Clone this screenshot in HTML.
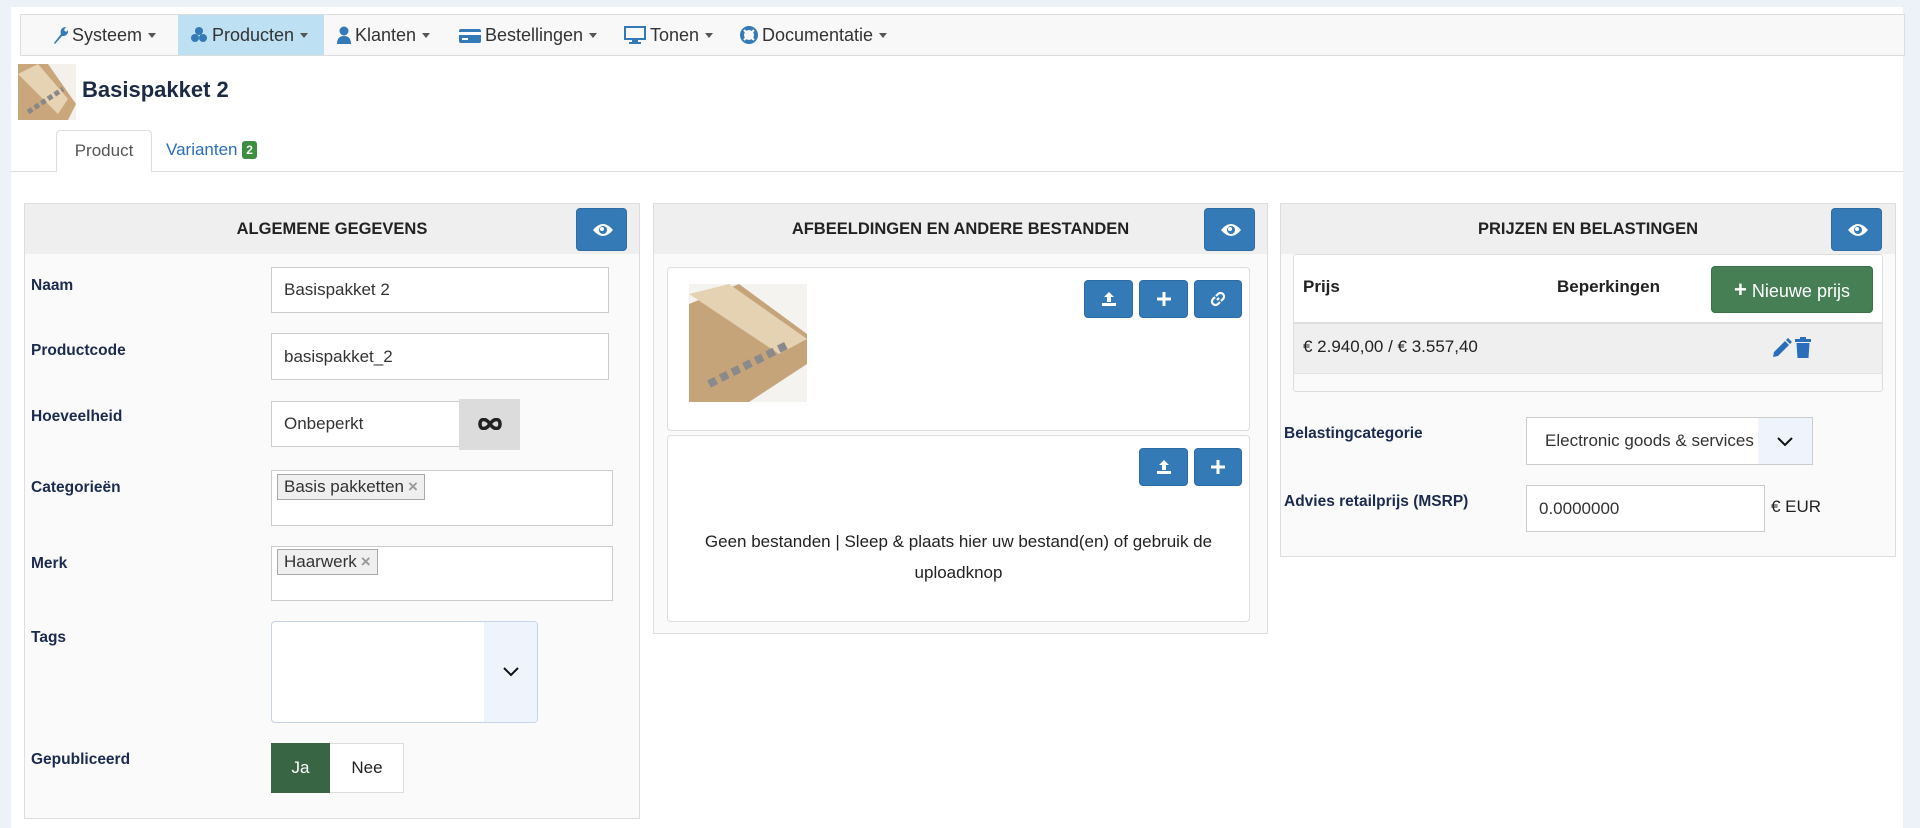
<!DOCTYPE html>
<html><head><meta charset="utf-8"><style>
*{box-sizing:border-box;margin:0;padding:0}
body{width:1920px;height:828px;background:#edf2f9;font-family:"Liberation Sans",sans-serif;font-size:17px;color:#222;position:relative;overflow:hidden}
.a{position:absolute}
.main{left:11px;top:7px;width:1892px;height:821px;background:#fff}
.nav{left:20px;top:14px;width:1885px;height:42px;background:#f8f8f8;border:1px solid #ddd}
.ni{position:absolute;top:0;height:40px;line-height:40px;font-size:18px;color:#333;white-space:nowrap}
.ni svg{vertical-align:-3px;margin-right:4px}
.car{display:inline-block;border-top:5px solid #555;border-left:4px solid transparent;border-right:4px solid transparent;margin-left:6px;vertical-align:3px}
.panel{background:#fafafa;border:1px solid #ddd}
.ph{position:absolute;left:0;top:0;right:0;height:50px;background:#efefef;text-align:center;line-height:50px;font-weight:bold;font-size:16.5px;color:#222}
.eye{position:absolute;width:51px;height:43px;background:#337ab7;border-radius:4px;border:1px solid #2e6da4}
.eye svg{position:absolute;left:15px;top:13px}
.lbl{position:absolute;font-weight:bold;font-size:15.5px;color:#1b2b4f}
.inp{position:absolute;background:#fff;border:1px solid #ccc;padding-left:12px;font-size:17px;color:#333}
.btn{position:absolute;background:#337ab7;border:1px solid #2e6da4;border-radius:4px}
.btn svg{position:absolute;left:50%;top:50%;transform:translate(-50%,-50%)}
.tag{position:absolute;background:#efefef;border:1px solid #aaa;padding:0 6px;height:26px;line-height:24px;font-size:17px;color:#333}
.tag b{color:#999;font-size:17px;margin-left:4px}
</style></head><body>
<div class="a main"></div>
<div class="a nav">
 <div class="ni" style="left:31px"><svg width="16" height="18" viewBox="0 0 16 18"><path d="M2 17 L9 8 A5 5 0 0 1 14 1 L12 4 L14 6 L16 4 A5 5 0 0 1 10 10 L3 18Z" fill="#337ab7"/></svg>Systeem<span class="car"></span></div>
 <div class="ni" style="left:157px;width:146px;background:#bde0f3;padding-left:12px"><svg width="18" height="18" viewBox="0 0 18 18"><circle cx="9" cy="5" r="4" fill="#337ab7"/><circle cx="5" cy="12" r="4" fill="#337ab7"/><circle cx="13" cy="12" r="4" fill="#337ab7"/></svg>Producten<span class="car"></span></div>
 <div class="ni" style="left:316px"><svg width="14" height="18" viewBox="0 0 14 18"><circle cx="7" cy="5" r="4.5" fill="#337ab7"/><path d="M0 18 Q0 10 7 10 Q14 10 14 18Z" fill="#337ab7"/></svg>Klanten<span class="car"></span></div>
 <div class="ni" style="left:438px"><svg width="22" height="16" viewBox="0 0 22 16"><rect x="0" y="1" width="22" height="14" rx="2" fill="#337ab7"/><rect x="0" y="4" width="22" height="3" fill="#fff"/><rect x="3" y="10" width="6" height="2" fill="#fff"/></svg>Bestellingen<span class="car"></span></div>
 <div class="ni" style="left:603px"><svg width="22" height="18" viewBox="0 0 22 18"><rect x="1" y="1" width="20" height="12" fill="none" stroke="#337ab7" stroke-width="2"/><rect x="8" y="14" width="6" height="2" fill="#337ab7"/><rect x="5" y="16" width="12" height="2" fill="#337ab7"/></svg>Tonen<span class="car"></span></div>
 <div class="ni" style="left:719px"><svg width="18" height="18" viewBox="0 0 18 18"><circle cx="9" cy="9" r="7" fill="none" stroke="#337ab7" stroke-width="4"/><path d="M4 4L7 7M14 4L11 7M4 14L7 11M14 14L11 11" stroke="#fff" stroke-width="2"/></svg>Documentatie<span class="car"></span></div>
</div>
<svg class="a" style="left:18px;top:64px" width="58" height="56" viewBox="0 0 58 56"><rect width="58" height="56" fill="#f4f1ec"/><path d="M0 0 L30 0 L58 40 L50 56 L0 56Z" fill="#c9a67c"/><path d="M0 10 L20 0 L50 35 L40 50Z" fill="#e6d3b3"/><path d="M10 48 L45 25" stroke="#888" stroke-width="5" stroke-dasharray="5 3"/></svg>
<div class="a" style="left:82px;top:77px;font-size:22px;font-weight:bold;color:#1b2b44">Basispakket 2</div>
<div class="a" style="left:11px;top:171px;width:1892px;height:1px;background:#ddd"></div>
<div class="a" style="left:56px;top:130px;width:96px;height:42px;background:#fff;border:1px solid #ddd;border-bottom:none;border-radius:4px 4px 0 0;text-align:center;line-height:40px;font-size:17px;color:#555">Product</div>
<div class="a" style="left:166px;top:130px;line-height:40px;font-size:17px;color:#2a6ebb">Varianten <span style="display:inline-block;background:#3e8e41;color:#fff;font-size:12px;font-weight:bold;padding:0 4px;line-height:18px;border-radius:3px;vertical-align:1px">2</span></div>

<div class="a panel" style="left:24px;top:203px;width:616px;height:616px">
 <div class="ph">ALGEMENE GEGEVENS</div>
</div>
<div class="eye" style="left:576px;top:208px"><svg width="22" height="16" viewBox="0 0 22 16"><path d="M1 8 Q11 -4 21 8 Q11 20 1 8Z" fill="#fff"/><circle cx="11" cy="8" r="4" fill="#337ab7"/><circle cx="10" cy="7" r="2" fill="#fff"/></svg></div>
<div class="lbl" style="left:31px;top:277px">Naam</div>
<div class="inp" style="left:271px;top:267px;width:338px;height:46px;line-height:44px">Basispakket 2</div>
<div class="lbl" style="left:31px;top:342px">Productcode</div>
<div class="inp" style="left:271px;top:333px;width:338px;height:47px;line-height:45px">basispakket_2</div>
<div class="lbl" style="left:31px;top:408px">Hoeveelheid</div>
<div class="inp" style="left:271px;top:401px;width:189px;height:46px;line-height:44px">Onbeperkt</div>
<div class="a" style="left:459px;top:399px;width:61px;height:51px;background:#dcdcdc"><svg style="position:absolute;left:19px;top:19px" width="24" height="12" viewBox="0 0 24 12"><path d="M12 6 C8 0 2 0 2 6 C2 12 8 12 12 6 C16 0 22 0 22 6 C22 12 16 12 12 6Z" fill="none" stroke="#222" stroke-width="3.5"/></svg></div>
<div class="lbl" style="left:31px;top:479px">Categorieën</div>
<div class="inp" style="left:271px;top:470px;width:342px;height:56px"></div>
<div class="tag" style="left:277px;top:474px">Basis pakketten<b>×</b></div>
<div class="lbl" style="left:31px;top:555px">Merk</div>
<div class="inp" style="left:271px;top:546px;width:342px;height:55px"></div>
<div class="tag" style="left:277px;top:549px">Haarwerk<b>×</b></div>
<div class="lbl" style="left:31px;top:629px">Tags</div>
<div class="a" style="left:271px;top:621px;width:267px;height:102px;background:#fff;border:1px solid #c6d3e6;border-radius:4px;overflow:hidden"><div style="position:absolute;right:0;top:0;width:53px;height:100%;background:#eff4fc"></div><svg style="position:absolute;right:18px;top:45px" width="16" height="10" viewBox="0 0 16 10"><path d="M1 1 L8 8 L15 1" fill="none" stroke="#111" stroke-width="2"/></svg></div>
<div class="lbl" style="left:31px;top:751px">Gepubliceerd</div>
<div class="a" style="left:271px;top:743px;width:133px;height:50px;background:#fff;border:1px solid #ddd"></div>
<div class="a" style="left:271px;top:743px;width:59px;height:50px;background:#386644;color:#fff;text-align:center;line-height:50px">Ja</div>
<div class="a" style="left:330px;top:743px;width:74px;height:50px;text-align:center;line-height:50px;color:#222">Nee</div>

<div class="a panel" style="left:653px;top:203px;width:615px;height:431px">
 <div class="ph">AFBEELDINGEN EN ANDERE BESTANDEN</div>
</div>
<div class="eye" style="left:1204px;top:208px"><svg width="22" height="16" viewBox="0 0 22 16"><path d="M1 8 Q11 -4 21 8 Q11 20 1 8Z" fill="#fff"/><circle cx="11" cy="8" r="4" fill="#337ab7"/><circle cx="10" cy="7" r="2" fill="#fff"/></svg></div>
<div class="a" style="left:667px;top:267px;width:583px;height:164px;background:#fff;border:1px solid #ddd;border-radius:4px"></div>
<svg class="a" style="left:689px;top:284px" width="118" height="118" viewBox="0 0 118 118"><rect width="118" height="118" fill="#f5f3f0"/><path d="M0 20 L50 0 L118 50 L118 80 L60 118 L0 118Z" fill="#c6a47a"/><path d="M0 10 L40 0 L118 55 L90 70Z" fill="#e5d2b3"/><path d="M20 100 L100 60" stroke="#8a8a8a" stroke-width="8" stroke-dasharray="8 5"/></svg>
<div class="btn" style="left:1084px;top:280px;width:49px;height:38px"><svg width="16" height="16" viewBox="0 0 16 16"><path d="M8 1 L13 6 H10 V11 H6 V6 H3Z M1 12 H15 V15 H1Z" fill="#fff"/></svg></div>
<div class="btn" style="left:1139px;top:280px;width:49px;height:38px"><svg width="14" height="14" viewBox="0 0 14 14"><path d="M5.5 0h3v5.5H14v3H8.5V14h-3V8.5H0v-3h5.5Z" fill="#fff"/></svg></div>
<div class="btn" style="left:1194px;top:280px;width:48px;height:38px"><svg width="16" height="16" viewBox="0 0 16 16"><path d="M7 9 L9 7 M6 5 L8 3 A2.8 2.8 0 0 1 13 8 L11 10 M10 11 L8 13 A2.8 2.8 0 0 1 3 8 L5 6" fill="none" stroke="#fff" stroke-width="2.2"/></svg></div>
<div class="a" style="left:667px;top:435px;width:583px;height:187px;background:#fff;border:1px solid #ddd;border-radius:4px"></div>
<div class="btn" style="left:1139px;top:448px;width:49px;height:38px"><svg width="16" height="16" viewBox="0 0 16 16"><path d="M8 1 L13 6 H10 V11 H6 V6 H3Z M1 12 H15 V15 H1Z" fill="#fff"/></svg></div>
<div class="btn" style="left:1194px;top:448px;width:48px;height:38px"><svg width="14" height="14" viewBox="0 0 14 14"><path d="M5.5 0h3v5.5H14v3H8.5V14h-3V8.5H0v-3h5.5Z" fill="#fff"/></svg></div>
<div class="a" style="left:667px;top:526px;width:583px;text-align:center;line-height:31px;font-size:17px;color:#222">Geen bestanden | Sleep &amp; plaats hier uw bestand(en) of gebruik de<br>uploadknop</div>

<div class="a panel" style="left:1280px;top:203px;width:616px;height:354px">
 <div class="ph">PRIJZEN EN BELASTINGEN</div>
</div>
<div class="eye" style="left:1831px;top:208px"><svg width="22" height="16" viewBox="0 0 22 16"><path d="M1 8 Q11 -4 21 8 Q11 20 1 8Z" fill="#fff"/><circle cx="11" cy="8" r="4" fill="#337ab7"/><circle cx="10" cy="7" r="2" fill="#fff"/></svg></div>
<div class="a" style="left:1293px;top:254px;width:590px;height:138px;background:#fafafa;border:1px solid #ddd;border-radius:3px;overflow:hidden">
 <div style="position:absolute;left:0;top:0;right:0;height:69px;background:#fff;border-bottom:2px solid #ddd"></div>
 <div style="position:absolute;left:0;top:69px;right:0;height:50px;background:#efefef;border-bottom:1px solid #e3e3e3"></div>
</div>
<div class="a" style="left:1303px;top:277px;font-weight:bold;font-size:17px;color:#222">Prijs</div>
<div class="a" style="left:1557px;top:277px;font-weight:bold;font-size:17px;color:#222">Beperkingen</div>
<div class="a" style="left:1711px;top:266px;width:162px;height:47px;background:#467f53;border:1px solid #3d7048;border-radius:4px;color:#fff;font-size:18px;line-height:45px;text-align:center"><b style="font-size:22px">+</b> Nieuwe prijs</div>
<div class="a" style="left:1303px;top:337px;font-size:17px;color:#222">€ 2.940,00 / € 3.557,40</div>
<svg class="a" style="left:1772px;top:338px" width="20" height="20" viewBox="0 0 20 20"><path d="M1 19 L2 14 L13 3 L17 7 L6 18Z M14 2 L16 0 L20 4 L18 6Z" fill="#2a6ebb"/></svg>
<svg class="a" style="left:1795px;top:337px" width="16" height="21" viewBox="0 0 16 21"><path d="M0 2 H5 V0 H11 V2 H16 V5 H0Z M1.5 6 H14.5 L13.5 21 H2.5Z" fill="#2a6ebb"/></svg>
<div class="lbl" style="left:1284px;top:425px">Belastingcategorie</div>
<div class="a" style="left:1526px;top:417px;width:287px;height:48px;background:#fff;border:1px solid #ccc;overflow:hidden;white-space:nowrap">
 <div style="position:absolute;left:18px;top:0;line-height:46px;font-size:17px;color:#333">Electronic goods &amp; services</div>
 <div style="position:absolute;right:0;top:0;width:54px;height:100%;background:#eff4fc"></div>
 <svg style="position:absolute;right:19px;top:19px" width="16" height="10" viewBox="0 0 16 10"><path d="M1 1 L8 8 L15 1" fill="none" stroke="#111" stroke-width="2"/></svg>
</div>
<div class="lbl" style="left:1284px;top:493px">Advies retailprijs (MSRP)</div>
<div class="inp" style="left:1526px;top:485px;width:239px;height:47px;line-height:45px">0.0000000</div>
<div class="a" style="left:1771px;top:497px;font-size:17px;color:#222">€ EUR</div>
</body></html>
